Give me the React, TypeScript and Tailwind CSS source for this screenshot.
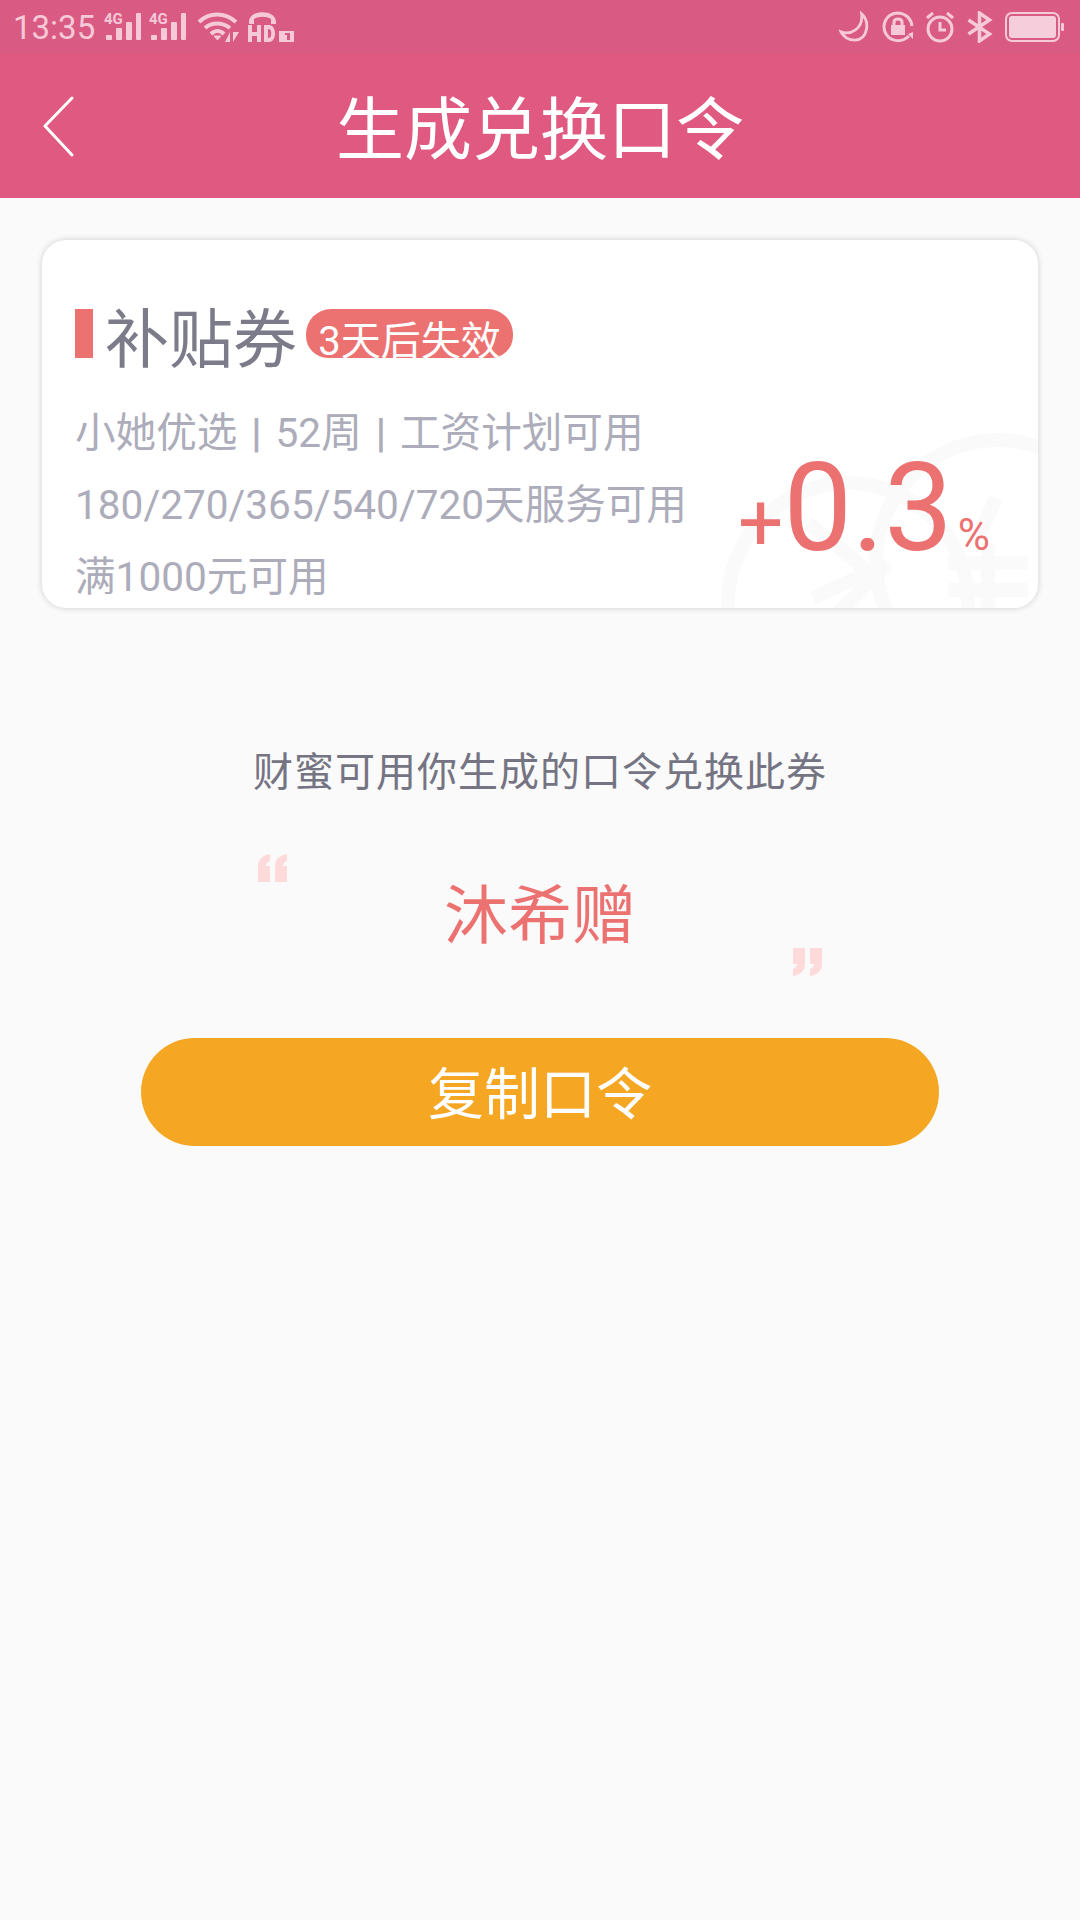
import React from 'react';

const sans = 'font-[Roboto,"Noto_Sans_CJK_SC",sans-serif]';

function Signal() {
  return (
    <svg width="38" height="28" viewBox="0 0 38 28" fill="#f6c9d9" className="overflow-visible">
      <text x="0" y="10.5" fontSize="15" fontWeight="700" fontFamily="Roboto, sans-serif">4G</text>
      <rect x="2" y="22" width="6" height="5" rx="1" />
      <rect x="12" y="15" width="6" height="12" rx="1" />
      <rect x="22" y="9" width="6" height="18" rx="1" />
      <rect x="32" y="0" width="5" height="27" rx="1" />
    </svg>
  );
}

function Wifi() {
  return (
    <svg width="44" height="30" viewBox="0 0 44 30" fill="none" stroke="#f6c9d9" strokeWidth="4">
      <path d="M2 10 C12 0 28 0 39 10" />
      <path d="M8 16 C15 10 25 10 33 16" />
      <path d="M14 22 C18 18 23 18 27 22" />
      <path d="M17 24 L20.5 28 L24 24 Z" fill="#f6c9d9" strokeWidth="1" />
      <path d="M33 30 L33 20 L28 30 Z M36 20 L36 30 L42 20 Z" fill="#f6c9d9" stroke="none" />
    </svg>
  );
}

function HdIcon() {
  return (
    <svg width="48" height="32" viewBox="0 0 48 32" fill="#f6c9d9">
      <path d="M2 11 C2 -2 29 -2 29 11 L29 13 L24 13 L24 8 C19 5 12 5 7 8 L7 13 L2 13 Z" />
      <path d="M1 14 H5 V21 H10 V14 H14 V31 H10 V25 H5 V31 H1 Z" />
      <path d="M17 14 H22 C30 14 30 31 22 31 H17 Z M21 18 V27 H22 C25 27 25 18 22 18 Z" fillRule="evenodd" />
      <path d="M32 20 H47 V31 H32 Z M38 22 V24 H40 V29 H43 V22 Z" fillRule="evenodd" />
    </svg>
  );
}

function StatusRight() {
  return (
    <div className="flex items-center gap-[11px]">
      <svg width="32" height="32" viewBox="0 0 34 32" fill="none" stroke="#f6c9d9" strokeWidth="3">
        <path d="M24 2 C33 10 31 29 17 30 C10 30 5 27 2 21 C12 25 26 18 24 2 Z" />
      </svg>
      <svg width="32" height="32" viewBox="0 0 32 32" fill="none" stroke="#f6c9d9" strokeWidth="3">
        <path d="M27 25 C20 32 9 31 4 23 C-1 14 4 3 15 2 C23 2 29 7 30 15" />
        <path d="M26 23 L31 28 L31 21 Z" fill="#f6c9d9" stroke="none" />
        <rect x="9" y="14" width="14" height="10" fill="#f6c9d9" stroke="none" />
        <path d="M12 14 V11 C12 7 20 7 20 11 V14" />
      </svg>
      <svg width="30" height="32" viewBox="0 0 30 32" fill="none" stroke="#f6c9d9" strokeWidth="3">
        <circle cx="15" cy="18" r="12" />
        <path d="M15 11 V19 H21" />
        <path d="M2 7 L8 2 M28 7 L22 2" />
      </svg>
      <svg width="27" height="32" viewBox="0 0 26 32" fill="none" stroke="#f6c9d9" strokeWidth="3.5">
        <path d="M2 9 L23 23 L13 30 V2 L23 9 L2 23" />
      </svg>
      <svg width="60" height="30" viewBox="0 0 60 30" fill="none" className="ml-[1px]">
        <rect x="1" y="1" width="53" height="28" rx="6" stroke="#f6c9d9" strokeWidth="2" />
        <rect x="4" y="4" width="47" height="22" rx="3" fill="#f6cdda" />
        <rect x="56" y="11" width="3" height="8" rx="1" fill="#f6c9d9" />
      </svg>
    </div>
  );
}

function Watermark() {
  return (
    <svg
      className="absolute right-0 bottom-0"
      width="330"
      height="180"
      viewBox="0 0 330 180"
      fill="none"
      stroke="#fafafb"
      strokeWidth="14"
    >
      <circle cx="140" cy="175" r="120" />
      <circle cx="290" cy="134" r="122" />
      <path d="M100 95 L150 135 L175 165 M125 190 L180 135 M105 170 L170 140" />
      <path d="M288 70 L270 110 M240 135 H320 M240 162 H320 M280 115 V180" />
    </svg>
  );
}

export default function App() {
  return (
    <div className={`flex min-h-[1920px] w-[1080px] flex-col bg-[#fafafa] ${sans}`}>
      {/* Status bar */}
      <div className="flex h-[54px] items-center justify-between bg-[#d95a82] pr-[15px] pl-[13px]">
        <div className="flex items-center">
          <span className="mr-[9px] text-[33px] leading-none text-[#f6c9d9]">13:35</span>
          <Signal />
          <div className="ml-[7px]">
            <Signal />
          </div>
          <div className="ml-[10px]">
            <Wifi />
          </div>
          <div className="ml-[6px]">
            <HdIcon />
          </div>
        </div>
        <StatusRight />
      </div>

      {/* Header */}
      <div className="relative flex h-[144px] items-center justify-center bg-[#df5980]">
        <svg className="absolute top-[42px] left-[42px]" width="34" height="62" viewBox="0 0 34 62" fill="none" stroke="#ffffff" strokeWidth="3" strokeLinecap="round" strokeLinejoin="round">
          <path d="M30 2 L3 30 L30 59" />
        </svg>
        <span className="mt-[10px] text-[68px] leading-none text-white">生成兑换口令</span>
      </div>

      {/* Coupon card */}
      <div className="relative mx-[42px] mt-[42px] h-[368px] overflow-hidden rounded-[24px] bg-white shadow-[0_0_6px_rgba(0,0,0,0.18)]">
        <Watermark />
        <div className="relative flex items-start pt-[69px] pl-[33px]">
          <div className="h-[49px] w-[18px] bg-[#ec7272]" />
          <span className="-mt-[1px] ml-[12px] text-[64px] leading-[66px] text-[#7b7b8a]">补贴券</span>
          <div className="ml-[9px] h-[49px] w-[207px] overflow-hidden rounded-t-[25px] rounded-b-[22px] bg-[#ec7272] text-center text-[40px] leading-[66px] text-white">
            3天后失效
          </div>
        </div>
        <div className="relative mt-[23px] flex items-start justify-between pr-[48px] pl-[33px]">
          <div className="flex flex-col text-[40.6px] leading-[72px] text-[#acacba]">
            <span>
              小她优选<span className="mx-[14px] font-bold">|</span>52周<span className="mx-[14px] font-bold">|</span>工资计划可用
            </span>
            <span>180/270/365/540/720天服务可用</span>
            <span>满1000元可用</span>
          </div>
          <div className="mt-[51px] flex items-baseline text-[#ec7272]">
            <span className="text-[80px] leading-none">+</span>
            <span className="text-[122px] leading-none">0.3</span>
            <span className="ml-[5px] text-[44px] leading-none">%</span>
          </div>
        </div>
      </div>

      {/* Code */}
      <div className="mt-[141px] text-center text-[40px] leading-[48px] tracking-[1px] text-[#747483]">
        财蜜可用你生成的口令兑换此券
      </div>
      <div className="mt-[57px] flex justify-center px-[258px]">
        <svg width="30" height="28" viewBox="0 0 30 28" fill="#ffdada" className="shrink-0">
          <path d="M0 28 V12 C0 5 5 1 12 0 V7 C9 8 8 10 8 12 H12 V28 Z M17 28 V12 C17 5 22 1 29 0 V7 C26 8 25 10 25 12 H29 V28 Z" />
        </svg>
        <div className="mt-[25px] flex-1 text-center text-[64px] leading-[76px] text-[#ec7272]">沐希赠</div>
        <svg width="30" height="28" viewBox="0 0 30 28" fill="#ffdada" className="mt-[94px] shrink-0">
          <path d="M30 0 V16 C30 23 25 27 18 28 V21 C21 20 22 18 22 16 H18 V0 Z M13 0 V16 C13 23 8 27 1 28 V21 C4 20 5 18 5 16 H1 V0 Z" />
        </svg>
      </div>

      <div className="mx-[141px] mt-[62px] flex h-[108px] items-center justify-center rounded-full bg-[#f5a623] pt-[6px] text-[56px] leading-none text-white">
        复制口令
      </div>
    </div>
  );
}
